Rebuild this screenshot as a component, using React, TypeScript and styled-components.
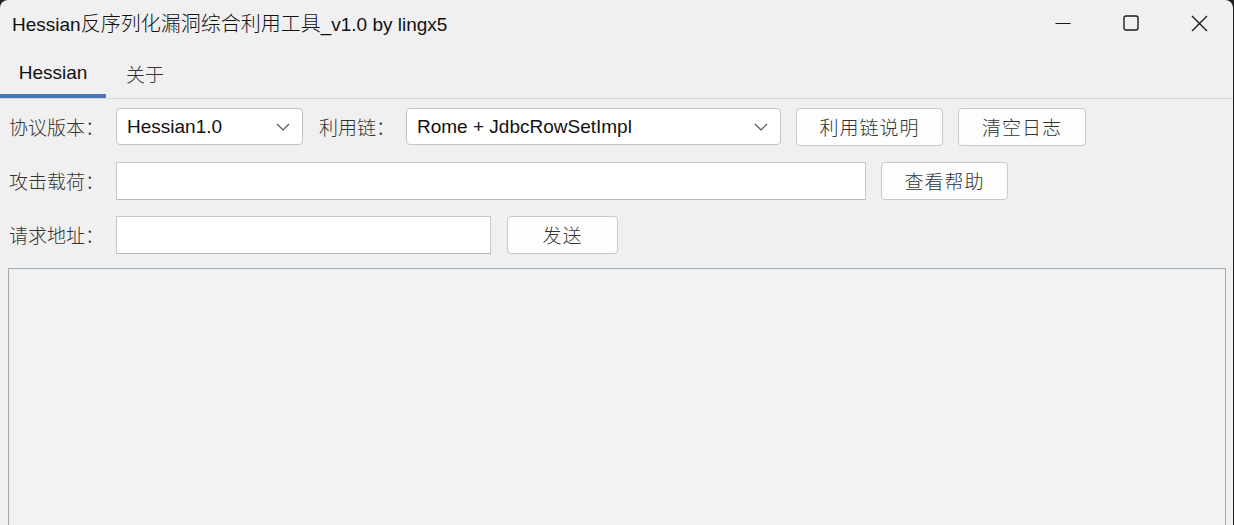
import React from 'react';
import styled, { createGlobalStyle } from 'styled-components';

const GlobalStyle = createGlobalStyle`
  html, body {
    margin: 0;
    padding: 0;
    background: #202020;
  }
  * { box-sizing: border-box; }
`;

const LATIN = `"Liberation Sans", Arial, "Noto Sans CJK SC", sans-serif`;
const CJK = `"Noto Sans CJK SC", "Liberation Sans", sans-serif`;

const Window = styled.div`
  width: 1233px;
  height: 525px;
  background: #f0f0f0;
  border-radius: 8px 8px 0 0;
  overflow: hidden;
  display: flex;
  flex-direction: column;
`;

const TitleBar = styled.div`
  height: 48px;
  display: flex;
  align-items: center;
  padding-left: 12px;
  flex-shrink: 0;
`;

const Title = styled.div`
  flex: 1;
  font-family: ${LATIN};
  font-size: 19px;
  color: #111;
  padding-bottom: 3px;
  white-space: nowrap;
`;

const TitleCjk = styled.span`
  font-family: ${CJK};
  font-size: 20px;
  font-weight: 300;
`;

const Controls = styled.div`
  display: flex;
  height: 100%;
`;

const CtrlButton = styled.div`
  width: 68px;
  height: 100%;
  display: flex;
  align-items: center;
  justify-content: center;
  padding-bottom: 2px;
  color: #1a1a1a;
`;

const TabBar = styled.div`
  height: 51px;
  display: flex;
  border-bottom: 1px solid #d6d6d6;
  flex-shrink: 0;
`;

const Tab = styled.div<{ $active?: boolean; $w: number }>`
  width: ${(p) => p.$w}px;
  display: flex;
  align-items: center;
  justify-content: center;
  font-family: ${(p) => (p.$active ? LATIN : CJK)};
  font-size: 19px;
  font-weight: ${(p) => (p.$active ? 400 : 300)};
  color: ${(p) => (p.$active ? '#111' : '#333')};
  padding-top: 4px;
  border-bottom: 4px solid ${(p) => (p.$active ? '#4579b3' : 'transparent')};
`;

const Content = styled.div`
  flex: 1;
  display: flex;
  flex-direction: column;
  padding: 8px 7px 0 8px;
`;

const Form = styled.div`
  display: flex;
  flex-direction: column;
  gap: 17px;
  padding-left: 1px;
  padding-top: 1px;
`;

const Row = styled.div`
  display: flex;
  align-items: center;
  height: 37px;
`;

const Label = styled.div<{ $w: number }>`
  width: ${(p) => p.$w}px;
  flex-shrink: 0;
  font-family: ${CJK};
  font-weight: 300;
  font-size: 19px;
  color: #333;
  white-space: nowrap;
`;

const Select = styled.div<{ $w: number }>`
  width: ${(p) => p.$w}px;
  height: 37px;
  flex-shrink: 0;
  background: #fff;
  border: 1px solid #c4c4c4;
  border-radius: 4px;
  display: flex;
  align-items: center;
  justify-content: space-between;
  padding: 0 12px 0 10px;
  font-family: ${LATIN};
  font-size: 19px;
  color: #111;
`;

const Input = styled.div<{ $w: number }>`
  width: ${(p) => p.$w}px;
  height: 38px;
  flex-shrink: 0;
  background: #fff;
  border: 1px solid #c8c8c8;
  border-bottom-color: #b8b8b8;
`;

const Button = styled.div<{ $w: number; $ml: number }>`
  width: ${(p) => p.$w}px;
  margin-left: ${(p) => p.$ml}px;
  height: 38px;
  flex-shrink: 0;
  background: #fdfdfd;
  border: 1px solid #c9c9c9;
  border-radius: 4px;
  display: flex;
  align-items: center;
  justify-content: center;
  font-family: ${CJK};
  font-weight: 300;
  font-size: 19px;
  color: #333;
  letter-spacing: 1px;
`;

const Gap = styled.div<{ $w: number }>`
  width: ${(p) => p.$w}px;
  flex-shrink: 0;
`;

const LogArea = styled.div`
  flex: 1;
  margin-top: 15px;
  width: 1218px;
  border: 1px solid #a3adb7;
  border-bottom: none;
  box-shadow: inset 1px 1px 0 #e6edf5;
  background: #f2f2f2;
`;

const Chevron = () => (
  <svg width="14" height="8" viewBox="0 0 14 8">
    <path d="M1 1 L7 7 L13 1" fill="none" stroke="#555" strokeWidth="1.2" />
  </svg>
);

export default function App() {
  return (
    <>
      <GlobalStyle />
      <Window>
        <TitleBar>
          <Title>
            Hessian<TitleCjk>反序列化漏洞综合利用工具</TitleCjk>_v1.0 by lingx5
          </Title>
          <Controls>
            <CtrlButton>
              <svg width="16" height="16" viewBox="0 0 16 16">
                <path d="M0.5 8.5 H15.5" stroke="#1a1a1a" strokeWidth="1.2" />
              </svg>
            </CtrlButton>
            <CtrlButton>
              <svg width="16" height="16" viewBox="0 0 16 16">
                <rect x="1" y="1" width="14" height="14" rx="2" fill="none" stroke="#1a1a1a" strokeWidth="1.4" />
              </svg>
            </CtrlButton>
            <CtrlButton>
              <svg width="17" height="17" viewBox="0 0 17 17">
                <path d="M1 1 L16 16 M16 1 L1 16" stroke="#1a1a1a" strokeWidth="1.4" />
              </svg>
            </CtrlButton>
          </Controls>
        </TitleBar>
        <TabBar>
          <Tab $active $w={106}>Hessian</Tab>
          <Tab $w={78}>关于</Tab>
        </TabBar>
        <Content>
          <Form>
            <Row>
              <Label $w={107}>协议版本：</Label>
              <Select $w={187}>
                <span>Hessian1.0</span>
                <Chevron />
              </Select>
              <Gap $w={16} />
              <Label $w={87}>利用链：</Label>
              <Select $w={375}>
                <span>Rome + JdbcRowSetImpl</span>
                <Chevron />
              </Select>
              <Button $w={147} $ml={15}>利用链说明</Button>
              <Button $w={128} $ml={15}>清空日志</Button>
            </Row>
            <Row>
              <Label $w={107}>攻击载荷：</Label>
              <Input $w={750} />
              <Button $w={127} $ml={15}>查看帮助</Button>
            </Row>
            <Row>
              <Label $w={107}>请求地址：</Label>
              <Input $w={375} />
              <Button $w={111} $ml={16}>发送</Button>
            </Row>
          </Form>
          <LogArea />
        </Content>
      </Window>
    </>
  );
}
